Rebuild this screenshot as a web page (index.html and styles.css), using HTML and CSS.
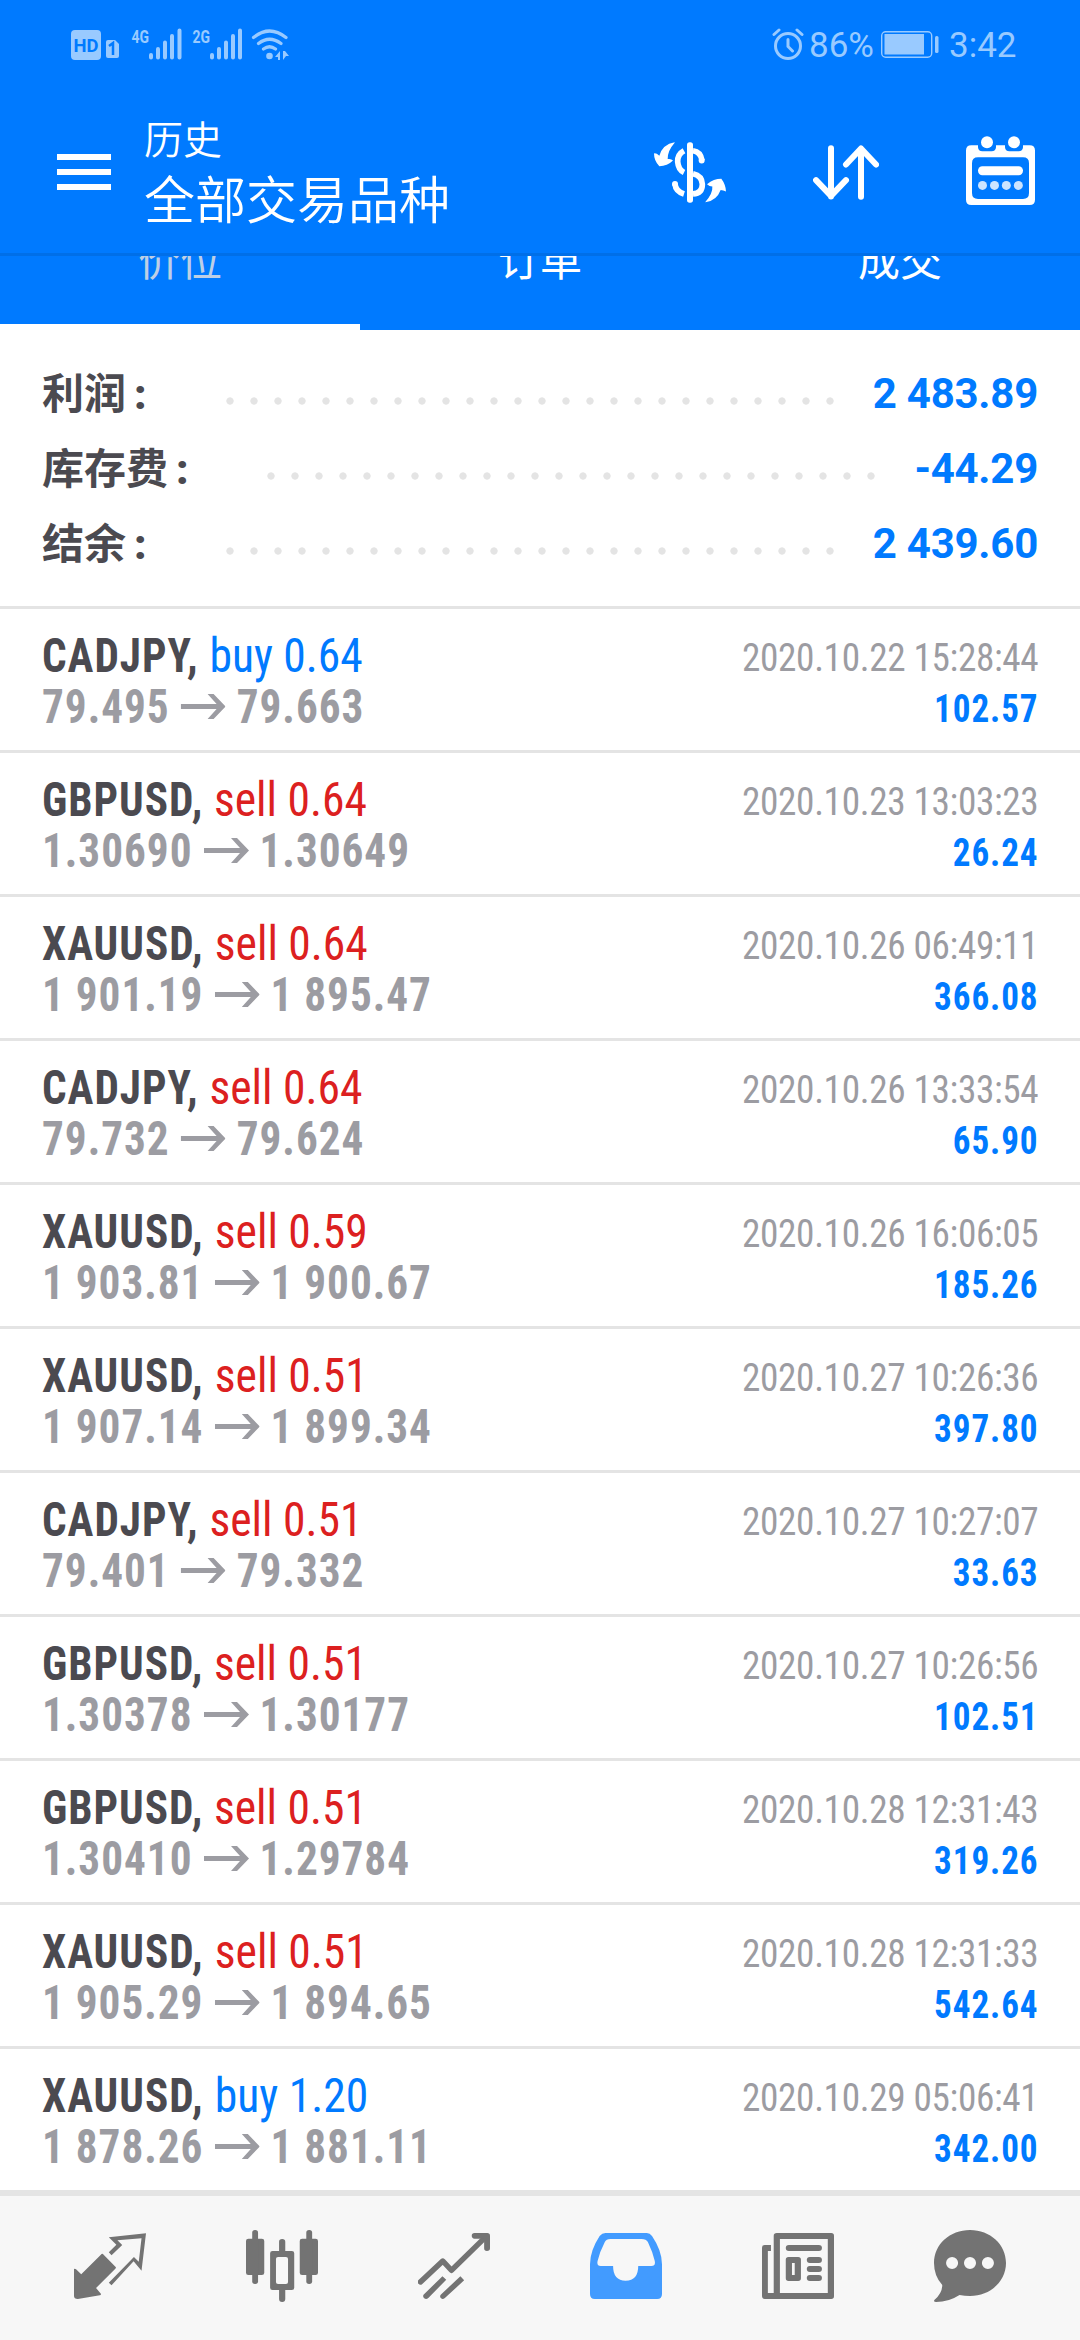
FILE: index.html
```html
<!DOCTYPE html>
<html lang="zh-CN">
<head>
<meta charset="utf-8">
<title>历史</title>
<link rel="stylesheet" href="styles.css">
</head>
<body>
<svg class="defs" aria-hidden="true">
  <symbol id="arrow" viewBox="0 0 45 25" preserveAspectRatio="none"><path d="M0 10H36L27 0H33L45 12.500L33 25H27L36 15H0Z"/></symbol>
</svg>
<div class="screen">
  <header class="top">
    <div class="status">
      <svg class="status-left" viewBox="71 26 220 36">
        <rect x="71" y="30" width="30" height="30" rx="4"/>
        <text class="hd" x="73.500" y="51.500" textLength="25" lengthAdjust="spacingAndGlyphs">HD</text>
        <path d="M108 40h7l4 4v12a2 2 0 0 1-2 2h-9a2 2 0 0 1-2-2v-14a2 2 0 0 1 2-2z"/>
        <path class="cut" d="M109 46l4-3v12"/>
        <text class="net" x="131.500" y="42.500" textLength="17.500" lengthAdjust="spacingAndGlyphs">4G</text>
        <path class="bars" d="M151 55v2.500M158 49v8.500M165 42.500v15M172 36v21.500M179.500 30.500v27"/>
        <text class="net" x="192.500" y="42.500" textLength="17.500" lengthAdjust="spacingAndGlyphs">2G</text>
        <path class="bars" d="M212 55v2.500M219 49v8.500M226 42.500v15M233 36v21.500M240 30.500v27"/>
        <path class="wifi" d="M253.500 37.500q16-13 32.500 0M258.500 43.500q11-8.500 22.500 0M263.500 49q6-4.500 12 0"/>
        <circle cx="269.500" cy="56" r="3.300"/>
        <path d="M280 51v9h-2v-3h-3zM283 60v-9h2l4 5h-3z"/>
      </svg>
      <div class="status-right">
        <svg class="alarm" viewBox="772 28 32 33"><circle cx="788" cy="46" r="12.500"/><path d="M788 39.500v7l4.500 4.500M774 34.500l5-4.500M802 34.500l-5-4.500"/></svg>
        <span class="percent">86%</span>
        <svg class="battery" viewBox="881 31 58 27"><rect class="shell" x="881.700" y="31.700" width="50" height="25.600" rx="4"/><rect x="884.500" y="34" width="39.500" height="20.500"/><rect x="935" y="36" width="3.500" height="17" rx="1.500"/></svg>
        <span class="clock">3:42</span>
      </div>
    </div>
    <div class="bar">
      <svg class="menu" viewBox="0 0 54 36"><path d="M0 0h54v6H0zM0 15h54v6H0zM0 30h54v6H0z"/></svg>
      <div class="titles">
        <div class="title">历史</div>
        <div class="subtitle">全部交易品种</div>
      </div>
      <div class="actions">
        <svg class="currency" viewBox="162 95 216 182" preserveAspectRatio="none">
          <path d="M224 96Q188 102 178 136Q168 127 162 129Q162 151 178 167Q202 167 219 150Q213 144 203 146Q202 122 224 97ZM316 275Q350 270 362 238Q370 238 378 243Q377 222 364 205Q341 205 321 221Q328 228 337 228Q339 248 316 274Z"/>
          <rect x="261" y="96" width="18" height="180" rx="8"/>
          <path class="curve" d="M252 121Q232 132 233 154Q235 178 252 186M279 121Q302 124 306 150M279 190Q306 196 307 221Q307 248 279 250M225 220Q227 242 252 250"/>
          <circle cx="305" cy="150" r="9"/><circle cx="225" cy="220" r="9"/>
        </svg>
        <svg class="sort" viewBox="639 104 198 164"><path d="M693 113V258M648 209L693 256L738 209M783 259V115M738 162L783 114L828 162"/></svg>
        <svg class="calendar" viewBox="1098 77 207 208" preserveAspectRatio="none">
          <path fill-rule="evenodd" d="M1114 105h20v6q1 12 13 12h28q12 0 13-12v-6h27v6q1 12 13 12h28q12 0 13-12v-6h20q16 0 16 16v148q0 16-16 16h-175q-16 0-16-16v-148q0-16 16-16ZM1134 141q-18 0-18 18v90q0 18 18 18h135q18 0 18-18v-90q0-18-18-18Z"/>
          <circle cx="1161" cy="96" r="18"/><circle cx="1242" cy="96" r="18"/>
          <rect x="1134" y="168" width="135" height="27" rx="13"/>
          <g opacity=".8"><circle cx="1147.500" cy="226" r="13.500"/><circle cx="1183.500" cy="226" r="13.500"/><circle cx="1219" cy="226" r="13.500"/><circle cx="1255" cy="226" r="13.500"/></g>
        </svg>
      </div>
    </div>
    <nav class="tabs">
      <span class="tab dim">价位</span>
      <span class="tab">订单</span>
      <span class="tab">成交</span>
    </nav>
  </header>

  <section class="summary">
    <div class="line"><span class="label">利润<i>:</i></span><span class="dots"></span><span class="value">2 483.89</span></div>
    <div class="line"><span class="label">库存费<i>:</i></span><span class="dots"></span><span class="value">-44.29</span></div>
    <div class="line"><span class="label">结余<i>:</i></span><span class="dots"></span><span class="value">2 439.60</span></div>
  </section>

  <main class="deals">
    <article class="deal"><div class="main"><p><b>CADJPY,</b> <span class="buy">buy 0.64</span></p><p class="price">79.495<svg><use href="#arrow"/></svg>79.663</p></div><div class="side"><p>2020.10.22 15:28:44</p><p class="profit">102.57</p></div></article>
    <article class="deal"><div class="main"><p><b>GBPUSD,</b> <span class="sell">sell 0.64</span></p><p class="price">1.30690<svg><use href="#arrow"/></svg>1.30649</p></div><div class="side"><p>2020.10.23 13:03:23</p><p class="profit">26.24</p></div></article>
    <article class="deal"><div class="main"><p><b>XAUUSD,</b> <span class="sell">sell 0.64</span></p><p class="price">1 901.19<svg><use href="#arrow"/></svg>1 895.47</p></div><div class="side"><p>2020.10.26 06:49:11</p><p class="profit">366.08</p></div></article>
    <article class="deal"><div class="main"><p><b>CADJPY,</b> <span class="sell">sell 0.64</span></p><p class="price">79.732<svg><use href="#arrow"/></svg>79.624</p></div><div class="side"><p>2020.10.26 13:33:54</p><p class="profit">65.90</p></div></article>
    <article class="deal"><div class="main"><p><b>XAUUSD,</b> <span class="sell">sell 0.59</span></p><p class="price">1 903.81<svg><use href="#arrow"/></svg>1 900.67</p></div><div class="side"><p>2020.10.26 16:06:05</p><p class="profit">185.26</p></div></article>
    <article class="deal"><div class="main"><p><b>XAUUSD,</b> <span class="sell">sell 0.51</span></p><p class="price">1 907.14<svg><use href="#arrow"/></svg>1 899.34</p></div><div class="side"><p>2020.10.27 10:26:36</p><p class="profit">397.80</p></div></article>
    <article class="deal"><div class="main"><p><b>CADJPY,</b> <span class="sell">sell 0.51</span></p><p class="price">79.401<svg><use href="#arrow"/></svg>79.332</p></div><div class="side"><p>2020.10.27 10:27:07</p><p class="profit">33.63</p></div></article>
    <article class="deal"><div class="main"><p><b>GBPUSD,</b> <span class="sell">sell 0.51</span></p><p class="price">1.30378<svg><use href="#arrow"/></svg>1.30177</p></div><div class="side"><p>2020.10.27 10:26:56</p><p class="profit">102.51</p></div></article>
    <article class="deal"><div class="main"><p><b>GBPUSD,</b> <span class="sell">sell 0.51</span></p><p class="price">1.30410<svg><use href="#arrow"/></svg>1.29784</p></div><div class="side"><p>2020.10.28 12:31:43</p><p class="profit">319.26</p></div></article>
    <article class="deal"><div class="main"><p><b>XAUUSD,</b> <span class="sell">sell 0.51</span></p><p class="price">1 905.29<svg><use href="#arrow"/></svg>1 894.65</p></div><div class="side"><p>2020.10.28 12:31:33</p><p class="profit">542.64</p></div></article>
    <article class="deal"><div class="main"><p><b>XAUUSD,</b> <span class="buy">buy 1.20</span></p><p class="price">1 878.26<svg><use href="#arrow"/></svg>1 881.11</p></div><div class="side"><p>2020.10.29 05:06:41</p><p class="profit">342.00</p></div></article>
  </main>

  <nav class="dock">
    <svg viewBox="215 180 209 216" preserveAspectRatio="none">
      <path d="M215 297Q218 295 221 298L236 313L293 254Q297 249 301 254L336 291Q338 293 335 296L279 354L293 371Q294 375 290 376L226 387Q215 387 215 378Z"/>
      <path fill-rule="evenodd" d="M316 202L424 190L411 302L388 274L324 346L316 338L389 261L403 275L411 205L341 211L355 225L324 256L316 247L338 224Z"/>
    </svg>
    <svg viewBox="714 180 209 216" preserveAspectRatio="none">
      <rect x="714" y="206" width="53" height="109" rx="7"/><rect x="732" y="180" width="17" height="162" rx="8"/>
      <rect x="870" y="206" width="53" height="109" rx="7"/><rect x="889" y="180" width="17" height="162" rx="8"/>
      <path fill-rule="evenodd" d="M791 243H810V215Q810 207 819 207Q828 207 828 215V243H847Q854 243 854 250V353Q854 360 847 360H828V387Q828 396 819 396Q810 396 810 387V360H791Q784 360 784 353V250Q784 243 791 243ZM807 261Q801 261 801 267V336Q801 342 807 342H830Q836 342 836 336V267Q836 261 830 261Z"/>
    </svg>
    <svg viewBox="1214 180 209 216" preserveAspectRatio="none">
      <path class="stroke" d="M1221 336L1286 273L1311 301L1412 199"/>
      <path d="M1378 189H1415Q1423 189 1423 197V235Q1423 243 1414 243Q1406 243 1406 235V206H1378Q1370 206 1370 197.500Q1370 189 1378 189Z"/>
      <path d="M1285 319L1296 329L1244 384Q1238 389 1232 385Q1227 380 1230 374ZM1337 319L1348 331L1292 384Q1286 389 1281 385Q1276 380 1280 374Z"/>
    </svg>
    <svg class="active" viewBox="145 180 209 216" preserveAspectRatio="none">
      <path fill-rule="evenodd" d="M190 189H310Q319 189 325 198Q354 242 354 283V372Q354 387 340 387H159Q145 387 145 372V283Q145 242 173 198Q180 189 190 189ZM204 207Q192 207 188 216Q173 246 167 273Q164 288 176 288H212Q212 332 248.500 332Q285 332 285 288H323Q336 288 333 273Q327 246 313 216Q308 207 295 207Z"/>
    </svg>
    <svg viewBox="645 180 209 216" preserveAspectRatio="none">
      <path fill-rule="evenodd" d="M688 189H846Q854 189 854 197V379Q854 387 846 387H653Q645 387 645 379V233Q645 225 653 225H671V243H662V369H679V197Q679 189 688 189ZM697 207V369H836V207Z"/>
      <rect x="714" y="225" width="105" height="18" rx="9"/><path fill-rule="evenodd" d="M722 261H750Q758 261 758 269V325Q758 333 750 333H722Q714 333 714 325V269Q714 261 722 261ZM732 279V315H740V279Z"/>
      <rect x="775" y="261" width="44" height="18" rx="9"/><rect x="775" y="288" width="44" height="18" rx="9"/><rect x="775" y="315" width="44" height="18" rx="9"/>
    </svg>
    <svg viewBox="1144 180 209 216" preserveAspectRatio="none">
      <path fill-rule="evenodd" d="M1248.500 180C1307 180 1353 223 1353 279C1353 334 1307 378 1248.500 378Q1233 378 1218 375Q1187 396 1150 396Q1142 396 1145 390Q1168 370 1168 345Q1144 318 1144 279C1144 223 1190 180 1248.500 180ZM1179 279A17.500 18 0 0 0 1214 279A17.500 18 0 0 0 1179 279ZM1231 279A17.500 18 0 0 0 1266 279A17.500 18 0 0 0 1231 279ZM1283 279A17.500 18 0 0 0 1318 279A17.500 18 0 0 0 1283 279Z"/>
    </svg>
  </nav>
</div>
</body>
</html>
```
FILE: styles.css
```css
* { box-sizing: border-box; }
body { margin: 0; font-family: Roboto, "Noto Sans CJK SC", sans-serif; background: #fff; }
p { margin: 0; }
svg { display: block; flex: none; }
.defs { position: absolute; width: 0; height: 0; }
.screen { width: 1080px; height: 2340px; display: flex; flex-direction: column; overflow: hidden; }

.top { flex: none; height: 330px; background: #007aff; color: #fff; fill: #fff; display: flex; flex-direction: column; }
.status { height: 90px; padding: 0 67px 0 71px; display: flex; justify-content: space-between; color: #99caff; fill: #99caff; }
.status-left { width: 220px; height: 36px; margin-top: 26px; }
.hd { font: 700 18px Roboto, sans-serif; fill: #007aff; }
.net { font: 700 19px Roboto, sans-serif; }
.cut { fill: none; stroke: #007aff; stroke-width: 2.5; }
.bars { stroke: #99caff; stroke-width: 4; stroke-linecap: round; }
.wifi { fill: none; stroke: #99caff; stroke-width: 3.2; stroke-linecap: round; }
.status-right { display: flex; align-items: flex-start; font-size: 35px; line-height: 41px; padding-top: 25px; }
.alarm { width: 32px; height: 33px; margin-top: 3px; fill: none; stroke: #99caff; stroke-width: 3; stroke-linecap: round; }
.percent { width: 63px; margin: 0 9px 0 5px; white-space: nowrap; }
.battery { width: 58px; height: 27px; margin-top: 6px; }
.shell { fill: none; stroke: #99caff; stroke-width: 1.4; }
.clock { width: 64px; margin-left: 10px; white-space: nowrap; }

.bar { height: 166px; padding: 0 45px 0 57px; display: flex; border-bottom: 3px solid #006fe8; }
.menu { width: 54px; height: 36px; margin-top: 64px; }
.titles { margin-left: 33px; padding-top: 26px; font-weight: 350; }
.title { font-size: 39px; line-height: 50px; }
.subtitle { font-size: 51px; line-height: 72px; }
.actions { margin-left: auto; display: flex; }
.currency { width: 72px; height: 61px; margin-top: 52px; }
.curve { fill: none; stroke: #fff; stroke-width: 17; }
.sort { width: 66px; height: 55px; margin: 55px 87px 0; fill: none; stroke: #fff; stroke-width: 18; stroke-linecap: round; stroke-linejoin: round; }
.calendar { width: 69px; height: 69px; margin-top: 46px; }

.tabs { height: 74px; display: grid; grid-template-columns: repeat(3, 1fr); overflow: hidden; }
.tab { font-size: 42px; line-height: 60px; height: 92px; margin-top: -24px; text-align: center; }
.dim { color: #bdcfe6; }
.tab:first-child { box-shadow: 0 6px 0 #fff; }

.summary { flex: none; height: 279px; padding: 26px 42px 0; border-bottom: 3px solid #e4e4e4; }
.line { height: 75px; display: flex; align-items: center; font-size: 42px; font-weight: 700; line-height: 75px; color: #4b4a50; }
.label { padding-top: 1px; }
.label i { font-style: normal; font-weight: 900; margin-left: 8px; }
.dots { width: 624px; height: 8px; margin: 14px 31px 0 auto; background: radial-gradient(circle, #e4e4e4 3.3px, transparent 4px) 0 0 / 24px 8px; }
.value { color: #007aff; letter-spacing: -.25px; }

.deals { flex: none; height: 1581px; overflow: hidden; }
.deal { height: 144px; padding: 21px 42px 0; border-bottom: 3px solid #e4e4e4; display: flex; justify-content: space-between; font-family: Roboto, "Roboto Condensed", sans-serif; font-stretch: 75%; line-height: 51px; white-space: nowrap; }
.main { font-size: 48px; color: #4b4a50; }
.main p { height: 51px; transform: scaleX(.9); transform-origin: left; }
.main b, .price { letter-spacing: 1.1px; }
.buy, .profit { color: #007aff; }
.sell { color: #dc2020; }
.buy, .sell { display: inline-block; margin-left: 1px; transform: scaleX(1.055); transform-origin: left; }
.price { display: flex; font-weight: 700; color: #9c9ca2; fill: #9c9ca2; }
.price svg { width: 50px; height: 25px; margin: 13px 12px 0 12.5px; }
.side { padding-top: 3px; font-size: 39px; color: #9c9ca2; text-align: right; }
.side p { transform: scaleX(.955); transform-origin: right; letter-spacing: -.36px; }
.side .profit { transform: scaleX(.9); font-weight: 700; color: #007aff; letter-spacing: 1px; }

.dock { flex: none; height: 150px; padding: 34px 74px 0; background: #f7f7f7; border-top: 6px solid #e4e4e4; display: flex; justify-content: space-between; fill: #737373; }
.dock svg { width: 72px; height: 72px; }
.dock .active { fill: #429bff; }
.stroke { fill: none; stroke: #737373; stroke-width: 16; stroke-linecap: round; stroke-linejoin: round; }
```
